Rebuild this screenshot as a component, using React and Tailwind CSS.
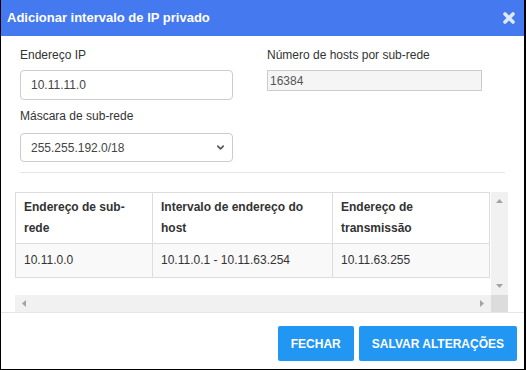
import { ChevronDown } from "lucide-react";

const font = { fontFamily: "'Liberation Sans', Arial, sans-serif" };

const Arrow = ({ dir }) => {
    // small grey scrollbar triangles
    const paths = {
        up: "M0 5 L3.5 1 L7 5 Z",
        down: "M0 1 L3.5 5 L7 1 Z",
        left: "M5 0 L1 3.5 L5 7 Z",
        right: "M1 0 L5 3.5 L1 7 Z",
    };
    const vertical = dir === "up" || dir === "down";
    return (
        <svg
            width={vertical ? 7 : 6}
            height={vertical ? 6 : 7}
            viewBox={vertical ? "0 0 7 6" : "0 0 6 7"}
            fill="#a3a3a3"
        >
            <path d={paths[dir]} />
        </svg>
    );
};

const App = () => {
    return (
        <div
            className="w-[526px] h-[370px] bg-white border-l border-r-2 border-b border-black flex flex-col text-[#333]"
            style={font}
        >
            {/* header */}
            <div className="h-9 bg-[#4479f0] flex items-center justify-between pl-[6px] pr-[8px]">
                <span className="text-white text-[13px] font-bold">Adicionar intervalo de IP privado</span>
                <svg width="14" height="14" viewBox="0 0 14 14">
                    <path
                        d="M3 3 L11 11 M11 3 L3 11"
                        stroke="#dfe8fd"
                        strokeWidth="3.6"
                        strokeLinecap="round"
                    />
                </svg>
            </div>

            {/* form */}
            <div className="px-[19px] pt-[10px]">
                <div className="flex gap-[34px]">
                    <div className="w-[213px] flex flex-col">
                        <label className="text-[12px] leading-[18px] mb-[6px]">Endereço IP</label>
                        <input
                            type="text"
                            defaultValue="10.11.11.0"
                            className="h-[30px] border border-[#ccc] rounded-[4px] px-[10px] text-[12px] text-[#444] outline-none"
                        />
                        <label className="text-[12px] leading-[18px] mt-[7px] mb-[8px]">Máscara de sub-rede</label>
                        <div className="h-[29px] border border-[#ccc] rounded-[4px] pl-[10px] pr-[6px] flex items-center justify-between text-[12px] text-[#444]">
                            <span>255.255.192.0/18</span>
                            <ChevronDown size={11} strokeWidth={3.5} color="#555" />
                        </div>
                    </div>
                    <div className="w-[215px] flex flex-col">
                        <label className="text-[12px] leading-[18px] mb-[6px]">Número de hosts por sub-rede</label>
                        <div className="h-[21px] border border-[#ccc] bg-[#f5f5f5] px-[2px] flex items-center text-[12px] text-[#555]">
                            16384
                        </div>
                    </div>
                </div>
                <div className="mt-[10px] w-[485px] border-t border-[#e5e5e5]" />
            </div>

            {/* table with scrollbars */}
            <div className="mx-[14px] mt-[19px] w-[493px] flex flex-col">
                <div className="flex">
                    <div className="w-[476px] h-[103px] overflow-hidden">
                        <table className="w-[475px] border-collapse text-[12px] leading-[21px]">
                            <thead>
                                <tr className="bg-white">
                                    <th className="w-[137px] border border-[#ddd] px-[8px] py-[4px] text-left font-bold align-top">
                                        Endereço de sub-rede
                                    </th>
                                    <th className="w-[180px] border border-[#ddd] px-[8px] py-[4px] text-left font-bold align-top">
                                        Intervalo de endereço do host
                                    </th>
                                    <th className="border border-[#ddd] px-[8px] py-[4px] text-left font-bold align-top">
                                        Endereço de transmissão
                                    </th>
                                </tr>
                            </thead>
                            <tbody>
                                <tr className="bg-[#f9f9f9]">
                                    <td className="border border-[#ddd] px-[8px] h-[34px]">10.11.0.0</td>
                                    <td className="border border-[#ddd] px-[8px]">10.11.0.1 - 10.11.63.254</td>
                                    <td className="border border-[#ddd] px-[8px]">10.11.63.255</td>
                                </tr>
                            </tbody>
                        </table>
                    </div>
                    <div className="w-[17px] h-[103px] bg-[#f1f1f1] flex flex-col items-center justify-between py-[6px]">
                        <Arrow dir="up" />
                        <Arrow dir="down" />
                    </div>
                </div>
                <div className="flex h-[17px]">
                    <div className="w-[476px] bg-[#f1f1f1] flex items-center justify-between px-[6px]">
                        <Arrow dir="left" />
                        <Arrow dir="right" />
                    </div>
                    <div className="w-[17px] bg-[#dcdcdc]" />
                </div>
            </div>

            {/* footer */}
            <div className="flex-1 border-t border-[#e5e5e5] flex justify-end items-start gap-[5px] pt-[13px] pr-[7px]">
                <button className="h-[35px] px-[13px] bg-[#2196f3] text-white text-[12px] font-bold rounded-[2px]">
                    FECHAR
                </button>
                <button className="h-[35px] px-[13px] bg-[#2196f3] text-white text-[12px] font-bold rounded-[2px]">
                    SALVAR ALTERAÇÕES
                </button>
            </div>
        </div>
    );
};

export default App;
